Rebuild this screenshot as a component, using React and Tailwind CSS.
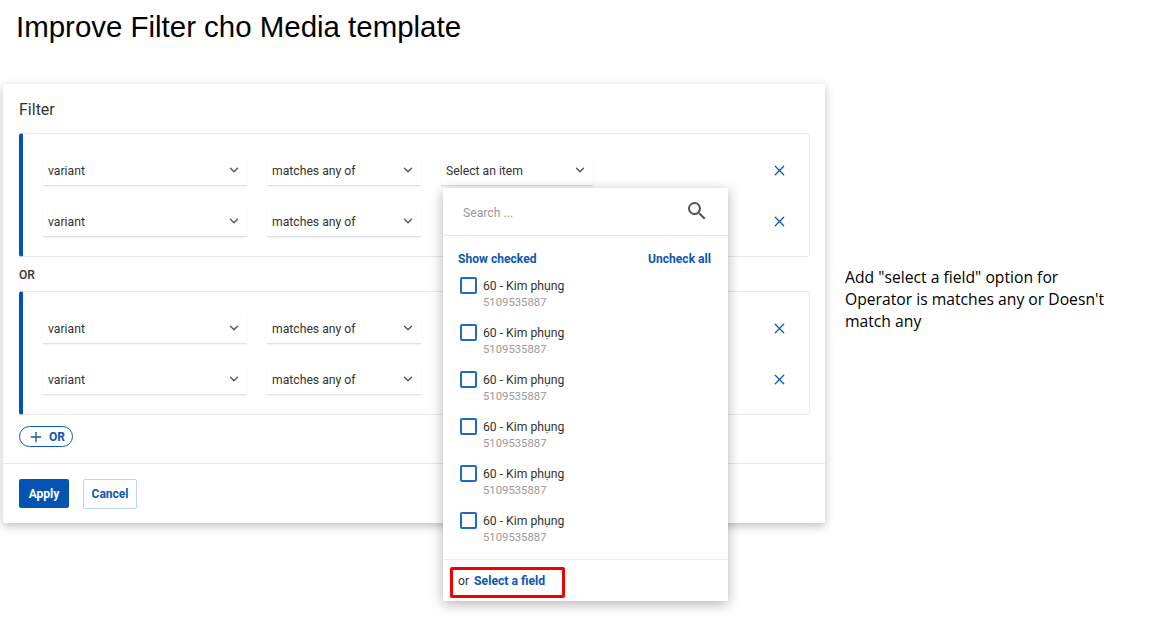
import { ChevronDown, Plus, X } from "lucide-react"
import { MdSearch } from "react-icons/md"

function SelectBox({ label, width }) {
    return (
        <div className={`${width} h-[31px] flex items-center justify-between pl-[5px] pr-[6px] border-b border-[#dfe3e6] shadow-[0_1px_2px_rgba(0,0,0,0.06)] text-[12.2px] text-[#333]`}>
            <span className="pt-[2px]">{label}</span>
            <ChevronDown size={14} strokeWidth={2.4} className="text-[#555]" />
        </div>
    )
}

function FilterRow({ third }) {
    return (
        <div className="flex items-center h-[31px]">
            <SelectBox label="variant" width="w-[204px]" />
            <div className="w-5" />
            <SelectBox label="matches any of" width="w-[154px]" />
            <div className="w-5" />
            {third ? <SelectBox label="Select an item" width="w-[152px]" /> : <div className="w-[152px]" />}
            <div className="flex-1 flex justify-end pr-[21px]">
                <X size={17} strokeWidth={1.8} className="text-[#0b57b5]" />
            </div>
        </div>
    )
}

function FilterGroup({ first }) {
    return (
        <div className="h-[124px] ml-4 mr-[15px] border border-l-4 border-[#e8eaec] border-l-[#0454b4] rounded-[3px] pl-5 pt-[21px] flex flex-col gap-5">
            <FilterRow third={first} />
            <FilterRow />
        </div>
    )
}

function CheckItem() {
    return (
        <div className="flex h-[47px] pl-[17px]">
            <div className="w-[17px] h-[17px] mt-[2px] border-2 border-[#1f6bc0] rounded-[2px]" />
            <div className="ml-[6px] mt-[2px]">
                <div className="text-[12.2px] leading-[18px] text-[#333]">60 - Kim phụng</div>
                <div className="text-[11.3px] leading-[15px] text-[#9a9a9a]">5109535887</div>
            </div>
        </div>
    )
}

export default function App() {
    return (
        <div className="relative w-[1156px] h-[643px] bg-white overflow-hidden font-['Roboto',sans-serif]">
            {/* Titulo */}
            <h1 className="pl-4 pt-[9px] h-[84px] font-['Liberation_Sans',sans-serif] text-[29.45px] leading-[36px] text-black">
                Improve Filter cho Media template
            </h1>

            <div className="flex items-start">
                {/* Panel de filtros */}
                <div className="ml-[3px] w-[822px] h-[439px] bg-white rounded-[2px] shadow-[0_3px_10px_rgba(0,0,0,0.25)]">
                    <div className="h-[49px] pl-4 pt-[15px] text-[16px] leading-[22px] text-[#333]">Filter</div>
                    <FilterGroup first />
                    <div className="h-[34px] pl-4 pt-[2px] flex items-center text-[12px] font-medium text-[#333]">OR</div>
                    <FilterGroup />
                    <div className="ml-4 mt-[11px] w-[54px] h-[21px] border border-[#0b57b5] rounded-full flex items-center pl-[8px] gap-[5px] text-[#0b57b5] text-[12px] font-bold">
                        <Plus size={16} strokeWidth={2} />
                        <span>OR</span>
                    </div>
                    <div className="mt-[16px] border-t border-[#e3ebf3]" />
                    <div className="flex items-start pl-4 pt-[15px] gap-[14px]">
                        <button className="w-[50px] h-[29px] bg-[#0454b4] rounded-[2px] text-white text-[12px] font-bold">Apply</button>
                        <button className="w-[54px] h-[30px] border border-[#bcd6ee] rounded-[2px] text-[#0b57b5] text-[12px] font-bold">Cancel</button>
                    </div>
                </div>

                {/* Nota */}
                <p className="ml-5 mt-[182px] w-[270px] font-['Open_Sans',sans-serif] text-[15.7px] leading-[22px] text-black">
                    Add "select a field" option for Operator is matches any or Doesn't match any
                </p>
            </div>

            {/* Dropdown del item */}
            <div className="absolute left-[443px] top-[188px] w-[285px] h-[413px] bg-white shadow-[0_3px_12px_rgba(0,0,0,0.3)]">
                <div className="h-[48px] flex items-center justify-between pl-5 pr-[19px] border-b border-[#dce6f0]">
                    <span className="text-[12.2px] pt-[4px] text-[#999]">Search ...</span>
                    <MdSearch size={24} className="text-[#555] mb-[2px]" />
                </div>
                <div className="flex justify-between pl-[15px] pr-[17px] pt-[15px] h-[39px] text-[12.1px] leading-[16px] font-bold text-[#0b57b5]">
                    <span>Show checked</span>
                    <span>Uncheck all</span>
                </div>
                <CheckItem />
                <CheckItem />
                <CheckItem />
                <CheckItem />
                <CheckItem />
                <CheckItem />
                <div className="mt-[2px] border-t border-[#e6ecef] pt-[7px] pl-[7px]">
                    <div className="w-[115px] h-[31px] border-[3px] border-[#f00000] rounded-[2px] pl-[5px] pb-[3px] flex items-center text-[12.2px]">
                        <span className="text-[#333]">or</span>
                        <span className="ml-[5px] font-bold text-[#0b57b5]">Select a field</span>
                    </div>
                </div>
            </div>
        </div>
    )
}
